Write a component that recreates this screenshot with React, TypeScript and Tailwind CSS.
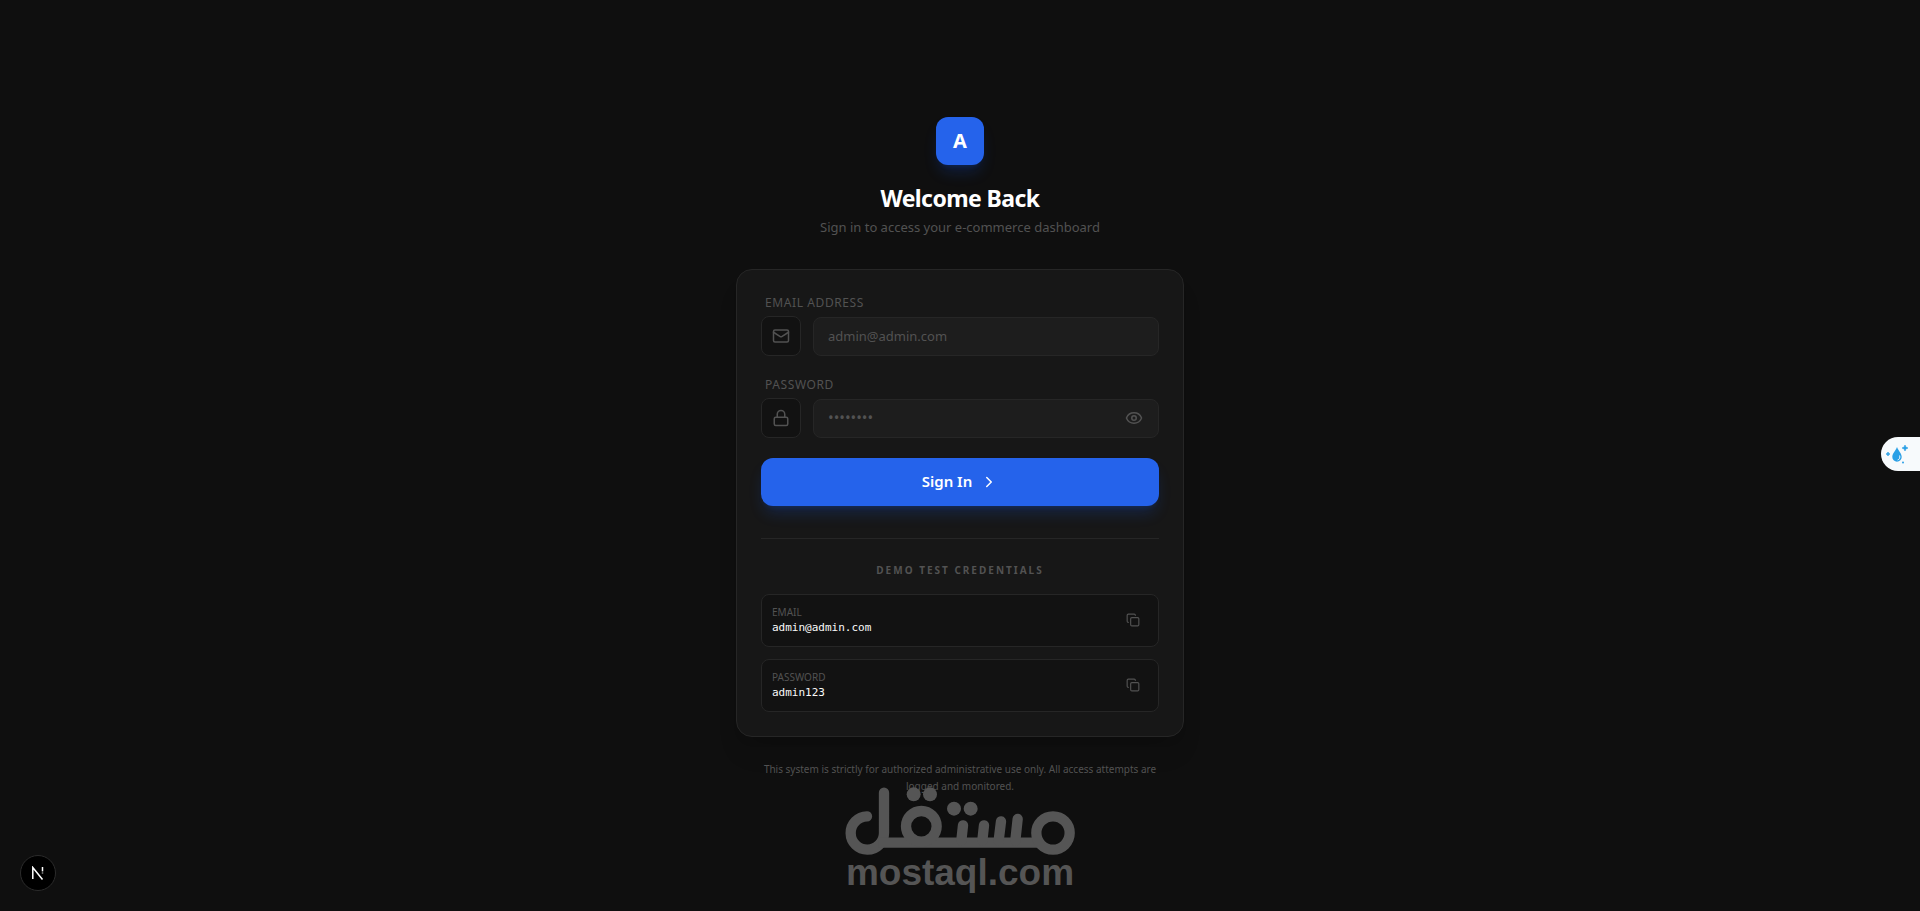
import { useState } from "react";
import { ChevronRight, Copy, Eye, Lock, Mail } from "lucide-react";

const credentials = [
  { label: "Email", value: "admin@admin.com" },
  { label: "Password", value: "admin123" },
];

function CredentialRow({ label, value }: { label: string; value: string }) {
  return (
    <div className="flex min-h-[53px] items-center justify-between rounded-lg border border-[#262626] bg-[#121212] px-2.5 py-2">
      <div className="flex flex-col">
        <span className="text-[10px] leading-4 text-[#525252] uppercase">{label}</span>
        <span className="font-['DejaVu_Sans_Mono',monospace] text-[11px] leading-4 text-[#fafafa]">{value}</span>
      </div>
      <button type="button" aria-label={`Copy ${label.toLowerCase()}`} className="p-2 text-[#525252]">
        <Copy size={14} />
      </button>
    </div>
  );
}

function Watermark() {
  return (
    <div className="pointer-events-none absolute inset-x-0 bottom-5 flex flex-col items-center text-[#555555]">
      <svg width="230" height="68" viewBox="0 0 690 204" fill="none" stroke="currentColor" strokeWidth="31" strokeLinecap="round" role="img" aria-label="مستقل">
        <path d="M66 88a50 50 0 1 0 51 50V17" />
        <path d="M100 167h490" strokeLinecap="butt" />
        <circle cx="229" cy="118" r="46" />
        <circle cx="624" cy="138" r="50" />
        <path d="M349 161l5-46M412 161l5-46M461 161l7-58M511 161l7-65" />
        <g fill="currentColor" stroke="none">
          <circle cx="206" cy="22" r="21" />
          <circle cx="255" cy="22" r="21" />
          <circle cx="327" cy="65" r="21" />
          <circle cx="377" cy="65" r="21" />
        </g>
      </svg>
      <span className="font-['Liberation_Sans',sans-serif] text-[37px] leading-9 font-bold">mostaql.com</span>
    </div>
  );
}

export default function App() {
  const [visible, setVisible] = useState(false);
  const iconBox = "flex size-10 shrink-0 items-center justify-center rounded-lg border border-[#262626] bg-[#121212] text-[#525252]";
  const field = "h-[39px] w-full rounded-lg border border-[#262626] bg-[#1d1d1d] px-3.5 text-[13px] text-white outline-none placeholder:text-[#525252]";
  const labelStyle = "ml-1 text-[12px] leading-[18px] tracking-wider text-[#525252] uppercase";

  return (
    <div className="relative flex min-h-screen flex-col items-center justify-center bg-[#0f0f0f] px-4 font-['Noto_Sans',sans-serif]">
      <main className="w-full max-w-md">
        <header className="mb-8 flex flex-col items-center">
          <div className="mb-4 flex size-12 items-center justify-center rounded-xl bg-[#2563eb] text-xl font-bold text-white shadow-lg shadow-blue-600/20">A</div>
          <h1 className="text-[23px] leading-[34px] font-bold tracking-tight text-white">Welcome Back</h1>
          <p className="mt-0.5 text-[13px] leading-5 text-[#525252]">Sign in to access your e-commerce dashboard</p>
        </header>

        <section className="rounded-2xl border border-[#262626] bg-[#171717] p-6 shadow-xl">
          <form onSubmit={(e) => e.preventDefault()}>
            <div className="mb-5 flex flex-col gap-1">
              <label htmlFor="email" className={labelStyle}>Email Address</label>
              <div className="flex items-end gap-3">
                <span className={iconBox}><Mail size={18} /></span>
                <input id="email" type="email" placeholder="admin@admin.com" className={field} />
              </div>
            </div>
            <div className="mb-5 flex flex-col gap-1">
              <label htmlFor="password" className={labelStyle}>Password</label>
              <div className="flex items-end gap-3">
                <span className={iconBox}><Lock size={18} /></span>
                <div className="relative w-full">
                  <input id="password" type={visible ? "text" : "password"} placeholder="••••••••" className={`${field} placeholder:text-[15px]`} />
                  <button type="button" aria-label="Show password" onClick={() => setVisible(!visible)} className="absolute inset-y-0 right-4 flex items-center text-[#525252]">
                    <Eye size={18} />
                  </button>
                </div>
              </div>
            </div>
            <button type="submit" className="flex h-12 w-full items-center justify-center gap-2 rounded-xl bg-[#2563eb] text-[15px] font-semibold text-white shadow-lg shadow-blue-600/20">
              Sign In
              <ChevronRight size={18} />
            </button>
          </form>

          <div className="mt-8 border-t border-[#262626] pt-[23px]">
            <h2 className="mb-4 text-center text-[10px] leading-4 font-bold tracking-[2px] text-[#525252] uppercase">Demo Test Credentials</h2>
            <div className="flex flex-col gap-3">
              {credentials.map((c) => (
                <CredentialRow key={c.label} label={c.label} value={c.value} />
              ))}
            </div>
          </div>
        </section>

        <p className="mt-6 px-4 text-center text-[10px] leading-[17px] text-[#525252]">
          This system is strictly for authorized administrative use only. All access attempts are logged and monitored.
        </p>
      </main>

      <Watermark />

      <button type="button" aria-label="Open developer tools" className="absolute bottom-5 left-5 flex size-9 items-center justify-center rounded-full border border-[#2b2b2b] bg-black text-white">
        <svg width="14" height="14" viewBox="0 0 14 14" fill="none" stroke="currentColor" strokeWidth="1.5">
          <path d="M1.8 13V1.5L11.5 13.5" />
          <path d="M11.5 1v4" />
          <path d="M11.5 5v3" opacity="0.4" />
        </svg>
      </button>

      <button type="button" aria-label="Open assistant" className="absolute top-[437px] right-0 flex h-[34px] w-[39px] items-center rounded-l-full bg-[#f7fafc] pl-1 text-[#2ba0e6]">
        <svg width="26" height="24" viewBox="0 0 26 24" fill="currentColor">
          <path d="M12 5C10.500 9 7.300 11.500 7.300 15a4.700 4.700 0 0 0 9.400 0C16.700 11.500 13.500 9 12 5Z" />
          <path d="M14.600 13.500c.8 2-.2 4-2 4.500" fill="none" stroke="#f7fafc" strokeWidth="1" />
          <path d="M20 3l.9 2.100L23 6l-2.100.9L20 9l-.9-2.100L17 6l2.100-.9ZM3 10l.7 1.300L5 12l-1.300.7L3 14l-.7-1.300L1 12l1.300-.7Z" stroke="currentColor" strokeWidth=".6" />
          <circle cx="18" cy="20.500" r="1" />
        </svg>
      </button>
    </div>
  );
}
